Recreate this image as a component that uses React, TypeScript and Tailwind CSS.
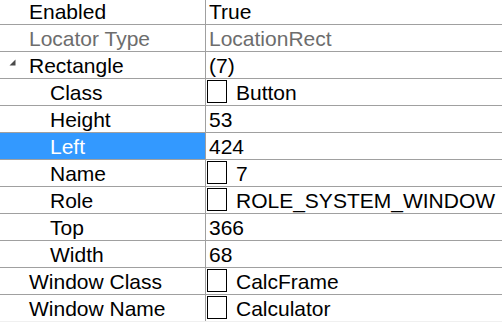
import React from 'react';

// ── Types ────────────────────────────────────────────────────────────────────

interface PropRow {
  name: string;
  value: string;
  level?: 0 | 1;
  expanded?: boolean;
  checkbox?: boolean;
  readOnly?: boolean;
  selected?: boolean;
}

// ── Data ─────────────────────────────────────────────────────────────────────

const ROWS: PropRow[] = [
  { name: 'Enabled', value: 'True' },
  { name: 'Locator Type', value: 'LocationRect', readOnly: true },
  { name: 'Rectangle', value: '(7)', expanded: true },
  { name: 'Class', value: 'Button', level: 1, checkbox: true },
  { name: 'Height', value: '53', level: 1 },
  { name: 'Left', value: '424', level: 1, selected: true },
  { name: 'Name', value: '7', level: 1, checkbox: true },
  { name: 'Role', value: 'ROLE_SYSTEM_WINDOW', level: 1, checkbox: true },
  { name: 'Top', value: '366', level: 1 },
  { name: 'Width', value: '68', level: 1 },
  { name: 'Window Class', value: 'CalcFrame', checkbox: true },
  { name: 'Window Name', value: 'Calculator', checkbox: true },
];

// ── Sub-components ───────────────────────────────────────────────────────────

function ExpandGlyph() {
  return (
    <svg width="7" height="7" viewBox="0 0 7 7" className="ml-[9px] mt-[6px] shrink-0">
      <path d="M6.5 0.5 L6.5 6.5 L0.5 6.5 Z" fill="#4a4a4a" />
    </svg>
  );
}

function Row({ row, last }: { row: PropRow; last: boolean }) {
  const textColor = row.readOnly ? 'text-[#6d6d6d]' : 'text-black';
  return (
    <div
      className={`flex h-[27px] border-b ${last ? 'border-[#f0f0f0]' : 'border-[#a0a0a0]'}`}
    >
      {/* Name cell */}
      <div
        className={`flex items-start pt-[1px] w-[206px] shrink-0 border-r border-[#a0a0a0] ${
          row.selected ? 'bg-[#3399ff] text-white' : textColor
        }`}
      >
        {row.expanded !== undefined ? (
          <div className="flex w-[29px] shrink-0">
            <ExpandGlyph />
          </div>
        ) : (
          <div className={row.level === 1 ? 'w-[50px] shrink-0' : 'w-[29px] shrink-0'} />
        )}
        <span className="whitespace-nowrap">{row.name}</span>
      </div>

      {/* Value cell */}
      <div className={`flex items-start pt-[1px] flex-1 min-w-0 ${textColor}`}>
        {row.checkbox ? (
          <>
            <span className="ml-[1px] w-[20px] h-[23px] border border-black bg-white shrink-0" />
            <span className="ml-[9px] whitespace-nowrap">{row.value}</span>
          </>
        ) : (
          <span className="ml-[3px] whitespace-nowrap">{row.value}</span>
        )}
      </div>
    </div>
  );
}

// ── Main component ───────────────────────────────────────────────────────────

export default function App() {
  return (
    <div
      className="w-[502px] h-[322px] overflow-hidden bg-white text-[21px] leading-[26px]"
      style={{ fontFamily: '"Liberation Sans", Arial, sans-serif' }}
    >
      <div className="mt-[-2px] flex flex-col">
        {ROWS.map((row, i) => (
          <Row key={row.name} row={row} last={i === ROWS.length - 1} />
        ))}
      </div>
    </div>
  );
}
